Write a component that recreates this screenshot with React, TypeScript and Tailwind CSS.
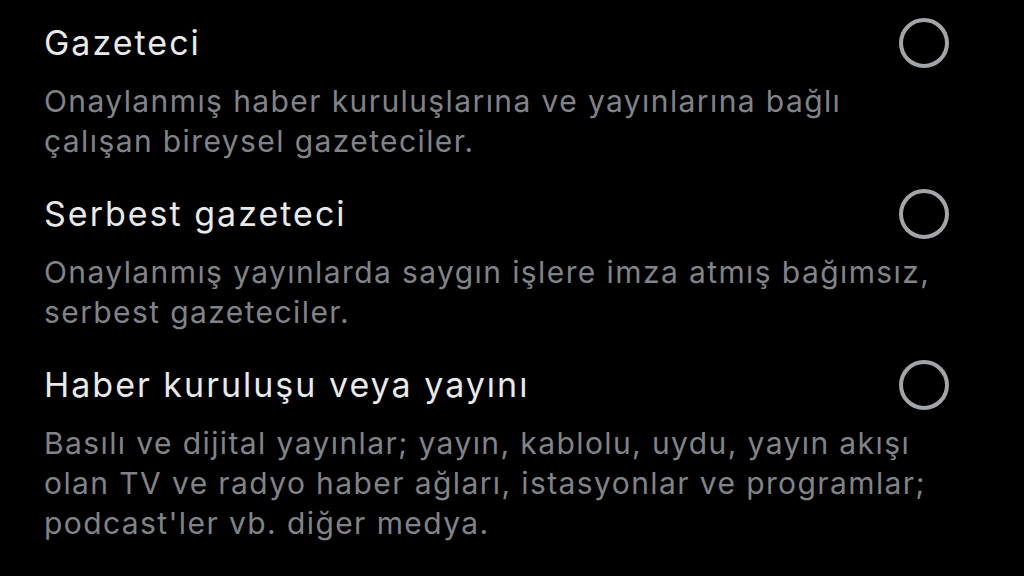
import React from "react";

const options = [
  {
    title: "Gazeteci",
    lines: ["Onaylanmış haber kuruluşlarına ve yayınlarına bağlı", "çalışan bireysel gazeteciler."],
  },
  {
    title: "Serbest gazeteci",
    lines: ["Onaylanmış yayınlarda saygın işlere imza atmış bağımsız,", "serbest gazeteciler."],
  },
  {
    title: "Haber kuruluşu veya yayını",
    lines: [
      "Basılı ve dijital yayınlar; yayın, kablolu, uydu, yayın akışı",
      "olan TV ve radyo haber ağları, istasyonlar ve programlar;",
      "podcast'ler vb. diğer medya.",
    ],
  },
];

export default function App() {
  return (
    <div
      className="w-[1024px] h-[576px] bg-black overflow-hidden pt-[23px] pl-[44px] pr-[75px] flex flex-col gap-[33px]"
      style={{ fontFamily: "Inter, 'Noto Sans', sans-serif" }}
    >
      {options.map((o) => (
        <div key={o.title} className="flex items-start">
          <div className="flex-1 min-w-0 flex flex-col gap-[18px]">
            <div className="text-[34px] leading-[40px] tracking-[2px] text-[#e7e9ea]">{o.title}</div>
            <div className="text-[30px] leading-[40px] tracking-[1.4px] text-[#808488]">
              {o.lines.map((l) => (
                <div key={l} className="whitespace-nowrap">{l}</div>
              ))}
            </div>
          </div>
          <div className="w-[50px] h-[50px] shrink-0 mt-[-5px] rounded-full border-[4px] border-[#a3a6a9]" />
        </div>
      ))}
    </div>
  );
}
